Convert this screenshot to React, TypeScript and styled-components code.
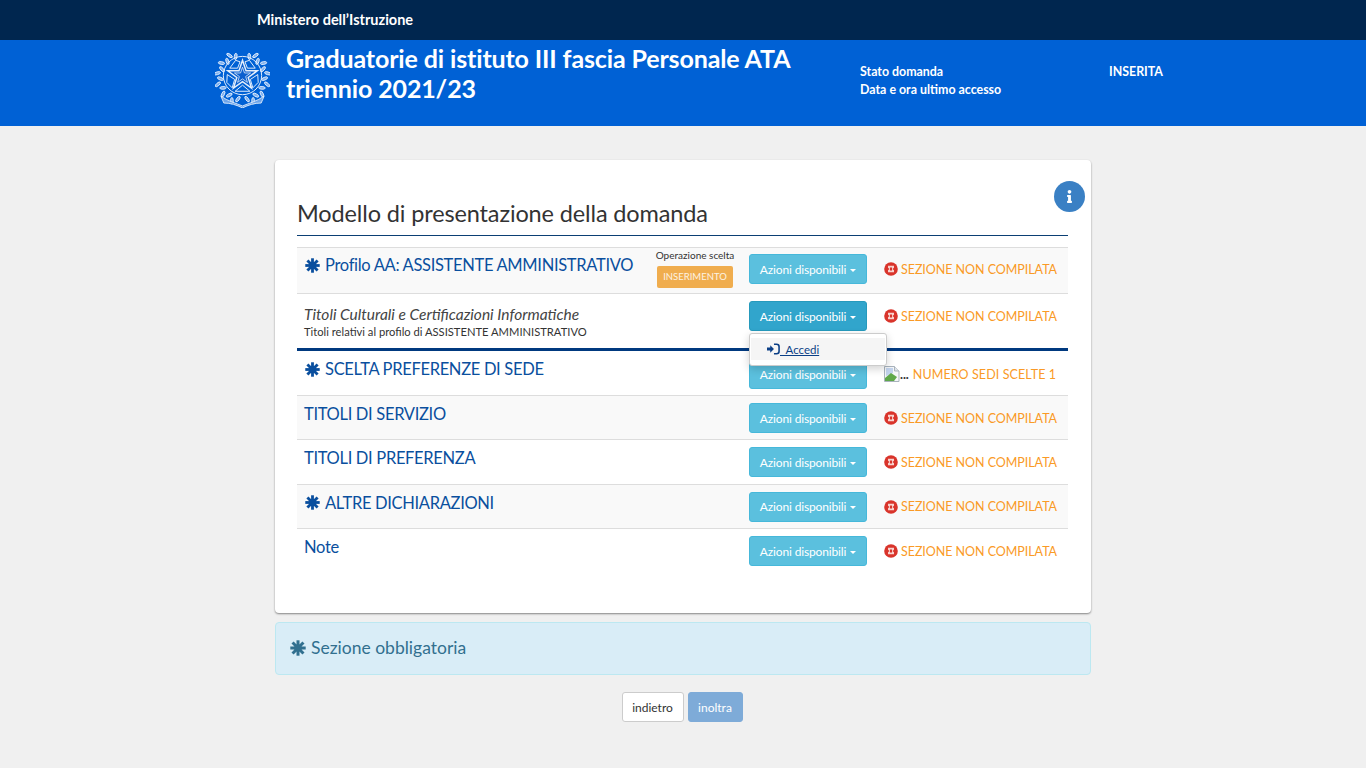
import { FC } from 'react';
import styled, { createGlobalStyle } from 'styled-components';
import { FaInfo } from 'react-icons/fa';

const fontStack = `Lato, "Noto Sans", "Liberation Sans", sans-serif`;

const GlobalStyle = createGlobalStyle`
	html, body {
		margin: 0;
		padding: 0;
		background: #f0f0f0;
		font-family: ${fontStack};
		color: #333;
	}
	* {
		box-sizing: border-box;
	}
`;

const Asterisk: FC<{ size?: number }> = ({ size = 15 }) => (
	<AsteriskSvg width={size} height={size} viewBox='0 0 16 16' aria-hidden='true'>
		{[0, 45, 90, 135].map((a) => (
			<line key={a} x1='8' y1='0.3' x2='8' y2='15.7' transform={`rotate(${a} 8 8)`} />
		))}
		<circle cx='8' cy='8' r='3.8' stroke='none' />
	</AsteriskSvg>
);

const StopIcon: FC = () => (
	<svg width='14' height='14' viewBox='0 0 14 14' aria-hidden='true'>
		<circle cx='7' cy='7' r='6.8' fill='#d9342b' />
		<path d='M4 3.800h6v1.900L8.500 7 10 8.300v1.900H4V8.300L5.500 7 4 5.700z' fill='#f8d3cf' />
		<rect x='6' y='5.500' width='2' height='3' fill='#d9342b' />
	</svg>
);

const BrokenImage: FC = () => (
	<svg width='16' height='16' viewBox='0 0 16 16' aria-hidden='true'>
		<path d='M0.500 0.500h10l4.500 4.500v10.500h-14.500z' fill='#f4f6f8' stroke='#a9b3bd' />
		<path d='M10.500 0.500v4.500h4.500' fill='#dfe4e8' stroke='#a9b3bd' />
		<path d='M2 2h7v5l-7 3z' fill='#c3d4ee' />
		<path d='M1 15v-3l6-5 3 2 3 2-3 4z' fill='#5fa84a' />
	</svg>
);

const LoginIcon: FC = () => (
	<svg width='13' height='12' viewBox='0 0 14 12' aria-hidden='true'>
		<path d='M0 4.500h3.500V2l4 4-4 4V7.500H0z' fill='#0b3f86' />
		<path d='M7.500 0.900h2.800c1.500 0 2.700 1.200 2.700 2.700v4.800c0 1.500-1.200 2.700-2.700 2.700H7.500' fill='none' stroke='#0b3f86' strokeWidth='1.700' />
	</svg>
);

// foglie del ramo, disposte lungo un arco attorno alla stella
const leaves = (side: 1 | -1) =>
	Array.from({ length: 13 }, (_, i) => {
		const deg = 168 - i * 12.5;
		const rad = (deg * Math.PI) / 180;
		const radius = i % 2 ? 26 : 22.5;
		return {
			cx: 28 + side * radius * Math.sin(rad),
			cy: 31 - radius * Math.cos(rad),
			rot: side * (deg + 90 + (i % 2 ? 25 : -25)),
		};
	});

const Emblem: FC = () => (
	<svg width='55' height='61' viewBox='0 0 56 62' aria-hidden='true'>
		<g fill='none' stroke='#e3eefc' strokeWidth='0.9'>
			{[...leaves(1), ...leaves(-1)].map((l, i) => (
				<ellipse key={i} cx={l.cx} cy={l.cy} rx='3.300' ry='1.400' transform={`rotate(${l.rot} ${l.cx} ${l.cy})`} fill='#7fb0ee' />
			))}
			<path d='M6 50 C13 55 21 57 28 60 C35 57 43 55 50 50 L47 57 C40 57 34 59 28 62 C22 59 16 57 9 57 Z' fill='#6ea5ea' />
			<circle cx='28' cy='29' r='19.500' strokeWidth='1' />
			<path d='M28 13.500 L31.600 24.200 L43 24.200 L33.800 31 L37.200 41.800 L28 35.200 L18.800 41.800 L22.200 31 L13 24.200 L24.400 24.200 Z' strokeWidth='1.500' fill='#0b5fce' />
			<path d='M28 20.500 L30 26.400 L36.200 26.400 L31.200 30 L33 36 L28 32.400 L23 36 L24.800 30 L19.800 26.400 L26 26.400 Z' strokeWidth='0.800' />
			<path d='M12.500 28 L20 33 L17.500 41.500 L12 36 Z M43.500 28 L36 33 L38.500 41.500 L44 36 Z M20.500 45 L28 38.800 L35.500 45 Z' strokeWidth='1' />
			<path d='M21 13.500 L25.500 15 L23 21.500 L15 21.500 Z M35 13.500 L30.500 15 L33 21.500 L41 21.500 Z' strokeWidth='1' />
		</g>
	</svg>
);

interface Sezione {
	titolo: string;
	obbligatoria?: boolean;
	striped?: boolean;
	numeroSedi?: boolean;
}

const sezioni: Sezione[] = [
	{ titolo: 'SCELTA PREFERENZE DI SEDE', obbligatoria: true, numeroSedi: true },
	{ titolo: 'TITOLI DI SERVIZIO', striped: true },
	{ titolo: 'TITOLI DI PREFERENZA' },
	{ titolo: 'ALTRE DICHIARAZIONI', obbligatoria: true, striped: true },
	{ titolo: 'Note' },
];

const Azioni: FC<{ attivo?: boolean }> = ({ attivo }) => (
	<AzioniButton $attivo={attivo}>
		Azioni disponibili
		<Caret />
	</AzioniButton>
);

const NonCompilata: FC = () => (
	<Stato>
		<StopIcon />
		SEZIONE NON COMPILATA
	</Stato>
);

const App: FC = () => (
	<>
		<GlobalStyle />
		<TopBar>Ministero dell’Istruzione</TopBar>
		<Header>
			<EmblemSlot>
				<Emblem />
			</EmblemSlot>
			<HeaderTitle>Graduatorie di istituto III fascia Personale ATA triennio 2021/23</HeaderTitle>
			<HeaderInfo>
				<HeaderLabels>
					<span>Stato domanda</span>
					<span>Data e ora ultimo accesso</span>
				</HeaderLabels>
				<span>INSERITA</span>
			</HeaderInfo>
		</Header>
		<Main>
			<Card>
				<InfoBadge>
					<FaInfo size={13} />
				</InfoBadge>
				<CardTitle>Modello di presentazione della domanda</CardTitle>
				<Table>
					<Row $striped $height={46} $top={6}>
						<RowTitle $offset={1}>
							<Asterisk />
							Profilo AA: ASSISTENTE AMMINISTRATIVO
						</RowTitle>
						<Operazione>
							<span>Operazione scelta</span>
							<OperazioneLabel>INSERIMENTO</OperazioneLabel>
						</Operazione>
						<Azioni />
						<NonCompilata />
					</Row>
					<Row $height={57} $top={7} $thick>
						<SubTitle>
							<em>Titoli Culturali e Certificazioni Informatiche</em>
							<small>Titoli relativi al profilo di ASSISTENTE AMMINISTRATIVO</small>
						</SubTitle>
						<span />
						<DropdownSlot>
							<Azioni attivo />
							<Menu>
								<MenuItem>
									<LoginIcon />
									<span>{'\u00a0\u00a0Accedi'}</span>
								</MenuItem>
							</Menu>
						</DropdownSlot>
						<NonCompilata />
					</Row>
					{sezioni.map((s) => (
						<Row
							key={s.titolo}
							$striped={s.striped}
							$height={s.numeroSedi ? 45 : 44.4}
							$top={s.numeroSedi ? 8 : 7}
						>
							<RowTitle $offset={s.numeroSedi ? 0 : 1}>
								{s.obbligatoria && <Asterisk />}
								{s.titolo}
							</RowTitle>
							<span />
							<Azioni />
							{s.numeroSedi ? (
								<Stato>
									<BrokenImage />
									<Ellipsis>...</Ellipsis>
									<SediText>NUMERO SEDI SCELTE 1</SediText>
								</Stato>
							) : (
								<NonCompilata />
							)}
						</Row>
					))}
				</Table>
			</Card>
			<Notice>
				<Asterisk size={16} />
				Sezione obbligatoria
			</Notice>
			<Actions>
				<BackButton>indietro</BackButton>
				<ForwardButton>inoltra</ForwardButton>
			</Actions>
		</Main>
	</>
);

export default App;

const TopBar = styled.div`
	height: 40px;
	background: #00264f;
	color: #fff;
	font-size: 14.5px;
	font-weight: 700;
	line-height: 39px;
	padding-left: 257px;
`;

const Header = styled.header`
	height: 86px;
	background: #0061d5;
	color: #fff;
	display: flex;
	align-items: flex-start;
	padding: 3px 0 0 214px;
`;

const EmblemSlot = styled.div`
	width: 72px;
	flex: none;
	padding: 4px 0 0 1px;
`;

const HeaderTitle = styled.h1`
	width: 574px;
	flex: none;
	margin: 0;
	font-size: 25px;
	letter-spacing: -0.13px;
	line-height: 30px;
	font-weight: 700;
`;

const HeaderInfo = styled.div`
	display: flex;
	padding-top: 20px;
	font-size: 12.4px;
	font-weight: 700;
	line-height: 18px;
`;

const HeaderLabels = styled.div`
	width: 249px;
	display: flex;
	flex-direction: column;
`;

const Main = styled.main`
	width: 816px;
	margin: 0 auto;
	padding-top: 34px;
`;

const Card = styled.section`
	position: relative;
	height: 453px;
	background: #fff;
	border-radius: 4px;
	box-shadow: 0 1px 2px rgba(0, 0, 0, 0.45);
	padding: 37px 23px 0 22px;
`;

const InfoBadge = styled.div`
	position: absolute;
	top: 21px;
	right: 6px;
	width: 31px;
	height: 31px;
	border-radius: 50%;
	background: #3a80c4;
	color: #fff;
	display: flex;
	align-items: center;
	justify-content: center;
`;

const CardTitle = styled.h3`
	margin: 0 0 11px;
	height: 39px;
	border-bottom: 1px solid #0b3f74;
	font-size: 23.5px;
	letter-spacing: -0.13px;
	font-weight: 400;
	line-height: 32px;
	color: #333;
`;

const Table = styled.div`
	border-top: 1px solid #ddd;
`;

const Row = styled.div<{ $striped?: boolean; $height: number; $top: number; $thick?: boolean }>`
	display: grid;
	grid-template-columns: 352px 100px 135px 1fr;
	height: ${({ $height }) => $height}px;
	padding-top: ${({ $top }) => $top}px;
	background: ${({ $striped }) => ($striped ? '#f9f9f9' : '#fff')};
	border-bottom: ${({ $thick }) => ($thick ? '3px solid #00397f' : '1px solid #ddd')};

	&:last-child {
		border-bottom: none;
	}
`;

const RowTitle = styled.div<{ $offset: number }>`
	display: flex;
	align-items: center;
	align-self: start;
	gap: 5px;
	height: 20px;
	margin-top: ${({ $offset }) => $offset}px;
	padding-left: 7px;
	font-size: 16.5px;
	letter-spacing: -0.32px;
	color: #0a4f9e;
	white-space: nowrap;

	svg {
		margin-left: 1px;
	}
`;

const SubTitle = styled.div`
	display: flex;
	flex-direction: column;
	padding: 4px 0 0 7px;
	white-space: nowrap;

	em {
		font-size: 15.5px;
		line-height: 19px;
		color: #444;
	}

	small {
		font-size: 11.2px;
		line-height: 15px;
		color: #333;
	}
`;

const Operazione = styled.div`
	display: flex;
	flex-direction: column;
	align-items: center;
	gap: 4px;
	width: 92px;
	margin-top: -5px;
	font-size: 10px;
	line-height: 13px;
	white-space: nowrap;
`;

const OperazioneLabel = styled.span`
	width: 76px;
	height: 22px;
	background: #f0ad4e;
	color: #fdf3e2;
	font-size: 9.5px;
	line-height: 22px;
	text-align: center;
	border-radius: 2px;
	font-weight: 400;
`;

const AzioniButton = styled.button<{ $attivo?: boolean }>`
	width: 118px;
	height: 30px;
	padding: 0;
	display: flex;
	align-items: center;
	justify-content: center;
	gap: 4px;
	font-family: ${fontStack};
	font-size: 12px;
	letter-spacing: -0.15px;
	color: #fff;
	background: ${({ $attivo }) => ($attivo ? '#31a5cc' : '#5bc0de')};
	border: 1px solid ${({ $attivo }) => ($attivo ? '#269abc' : '#46b8da')};
	border-radius: 3px;
`;

const Caret = styled.span`
	width: 0;
	height: 0;
	margin-top: 2px;
	border-left: 3.500px solid transparent;
	border-right: 3.500px solid transparent;
	border-top: 3.500px solid #fff;
`;

const DropdownSlot = styled.div`
	position: relative;
`;

const Menu = styled.div`
	position: absolute;
	top: 32px;
	left: 0;
	width: 138px;
	height: 33px;
	padding: 4px 1px;
	background: #fff;
	border: 1px solid #ccc;
	border-radius: 3px;
	box-shadow: 0 3px 8px rgba(0, 0, 0, 0.175);
	z-index: 2;
`;

const MenuItem = styled.div`
	display: flex;
	align-items: center;
	height: 22px;
	padding-left: 16px;
	background: #f5f5f5;
	font-size: 11.5px;
	color: #0b3f86;

	span {
		text-decoration: underline;
	}
`;

const Stato = styled.div`
	display: flex;
	align-items: center;
	align-self: start;
	height: 30px;
	gap: 3px;
	font-size: 12.5px;
	letter-spacing: -0.05px;
	color: #fa9a26;
	white-space: nowrap;
`;

const Ellipsis = styled.span`
	color: #333;
	font-weight: 700;
	margin-left: -3px;
`;

const SediText = styled.span`
	margin-left: 1px;
	letter-spacing: 0.1px;
`;

const AsteriskSvg = styled.svg`
	flex: none;
	stroke: currentColor;
	fill: currentColor;
	stroke-width: 3;
`;

const Notice = styled.div`
	display: flex;
	align-items: center;
	gap: 5px;
	height: 53px;
	margin-top: 9px;
	padding: 0 0 2px 14px;
	background: #d9edf7;
	border: 1px solid #bce8f1;
	border-radius: 4px;
	color: #31708f;
	font-size: 17.5px;
`;

const Actions = styled.div`
	display: flex;
	justify-content: center;
	gap: 4px;
	margin-top: 17px;
	padding-right: 2px;
`;

const BackButton = styled.button`
	width: 62px;
	height: 30px;
	padding: 0;
	font-family: ${fontStack};
	font-size: 12px;
	color: #333;
	background: #fff;
	border: 1px solid #ccc;
	border-radius: 3px;
`;

const ForwardButton = styled(BackButton)`
	width: 55px;
	color: #fff;
	background: #7eabd8;
	border-color: #7eabd8;
`;
